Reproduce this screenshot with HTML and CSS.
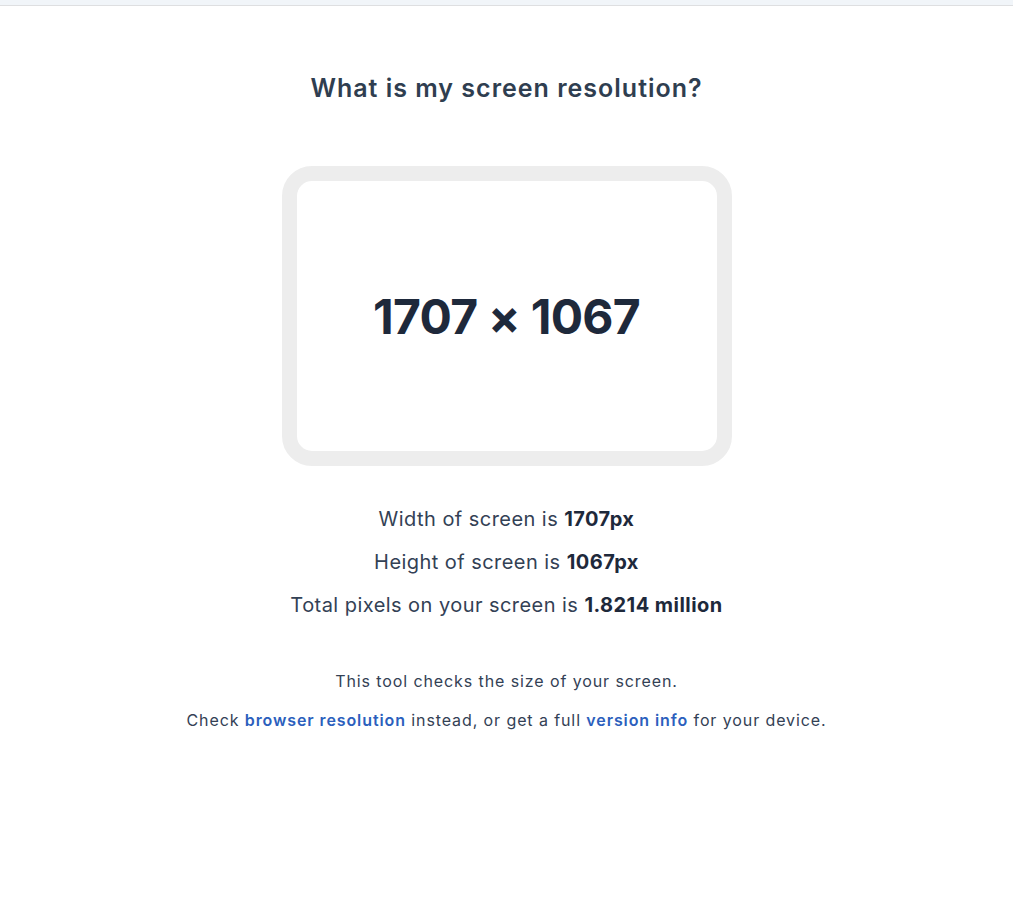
FILE: index.html
```html
<!DOCTYPE html>
<html lang="en">
<head>
<meta charset="utf-8">
<title>What is my screen resolution?</title>
<link rel="stylesheet" href="styles.css">
</head>
<body>
<div class="topbar"></div>
<main class="page">
  <h1 class="title">What is my screen resolution?</h1>
  <div class="screen">
    <div class="screen-inner">
      <span class="resolution">1707 × 1067</span>
    </div>
  </div>
  <div class="facts">
    <p>Width of screen is <b>1707px</b></p>
    <p>Height of screen is <b>1067px</b></p>
    <p>Total pixels on your screen is <b>1.8214 million</b></p>
  </div>
  <div class="notes">
    <p>This tool checks the size of your screen.</p>
    <p>Check <a href="#">browser resolution</a> instead, or get a full <a href="#">version info</a> for your device.</p>
  </div>
</main>
</body>
</html>
```

FILE: styles.css
```css
html, body {
  margin: 0;
  padding: 0;
  background: #ffffff;
}
body {
  font-family: Inter, "Noto Sans", sans-serif;
  color: #334155;
}
.topbar {
  height: 5px;
  background: #f1f5f9;
  border-bottom: 1px solid #dedfe1;
}
.page {
  display: flex;
  flex-direction: column;
  align-items: center;
}
.title {
  margin: 58px 0 0;
  font-size: 25px;
  line-height: 48px;
  font-weight: 600;
  letter-spacing: 1px;
  color: #2f3e50;
}
.screen {
  margin-top: 54px;
  width: 450px;
  height: 300px;
  box-sizing: border-box;
  border: 15px solid #ededed;
  border-radius: 30px;
  display: flex;
}
.screen-inner {
  flex: 1;
  display: flex;
  align-items: center;
  justify-content: center;
  border-radius: 15px;
}
.resolution {
  font-size: 48px;
  font-weight: 700;
  color: #1e293b;
  letter-spacing: -0.7px;
}
.facts {
  margin-top: 39px;
  display: flex;
  flex-direction: column;
  align-items: center;
  gap: 15px;
}
.facts p {
  margin: 0;
  font-size: 20px;
  line-height: 28px;
  letter-spacing: 0.45px;
  color: #334155;
}
.facts b {
  font-weight: 700;
  color: #1e293b;
}
.notes {
  margin-top: 50px;
  display: flex;
  flex-direction: column;
  align-items: center;
  gap: 15px;
}
.notes p {
  margin: 0;
  font-size: 16px;
  line-height: 24px;
  letter-spacing: 0.9px;
  color: #334155;
}
.notes a {
  color: #2c5fbd;
  font-weight: 600;
  text-decoration: none;
}
```
